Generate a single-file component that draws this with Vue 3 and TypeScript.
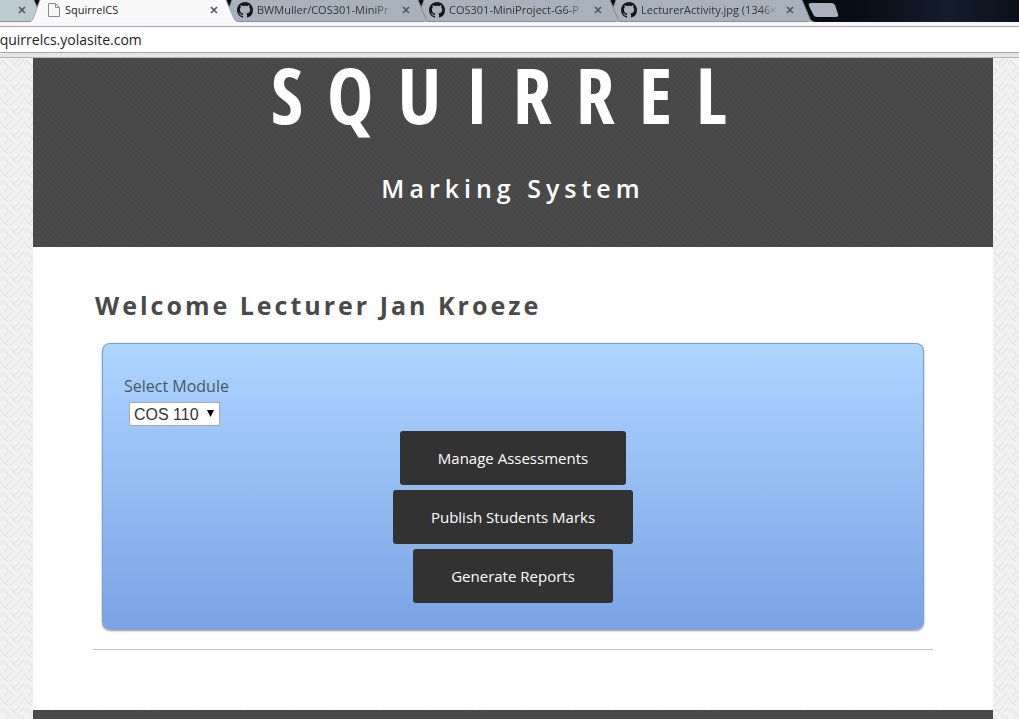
<script setup lang="ts">
import { ref } from 'vue'

interface Tab {
  id: string
  title: string
  icon: 'page' | 'github' | 'none'
  kind: 'first' | 'active' | 'idle'
}

const tabs: Tab[] = [
  { id: 'a', title: '', icon: 'none', kind: 'first' },
  { id: 'b', title: 'SquirrelCS', icon: 'page', kind: 'active' },
  { id: 'c', title: 'BWMuller/COS301-MiniPr', icon: 'github', kind: 'idle' },
  { id: 'd', title: 'COS301-MiniProject-G6-P', icon: 'github', kind: 'idle' },
  { id: 'e', title: 'LecturerActivity.jpg (1346×', icon: 'github', kind: 'idle' },
]

const address = ref('squirrelcs.yolasite.com')
const moduleCode = ref('COS 110')
const modules: string[] = ['COS 110', 'COS 121', 'COS 212', 'COS 301']
const actions: string[] = ['Manage Assessments', 'Publish Students Marks', 'Generate Reports']
</script>

<template>
  <div class="browser">
    <header class="chrome">
      <nav class="strip" aria-label="Tabs">
        <div v-for="tab in tabs" :key="tab.id" class="tab" :class="tab.kind">
          <svg class="shape" viewBox="0 0 208 22" preserveAspectRatio="none" aria-hidden="true">
            <path class="fill" d="M8 0 L1 19 Q0 21 -2 22 H206 Q203 21 202 19 L194 0 Z" />
            <path class="edge" d="M8 0 L1 19 Q0 21 -2 22 M206 22 Q203 21 202 19 L194 0" />
          </svg>
          <svg v-if="tab.icon === 'page'" class="page-icon" viewBox="0 0 12 14" aria-hidden="true">
            <path d="M.5 .5 H7.5 L11.5 4.5 V13.5 H.5 Z M7.5 .5 V4.5 H11.5" />
          </svg>
          <svg v-if="tab.icon === 'github'" class="github-icon" viewBox="0 0 16 16" aria-hidden="true">
            <path d="M8 0C3.58 0 0 3.58 0 8c0 3.54 2.29 6.53 5.47 7.59.4.07.55-.17.55-.38 0-.19-.01-.82-.01-1.49-2.01.37-2.53-.49-2.69-.94-.09-.23-.48-.94-.82-1.13-.28-.15-.68-.52-.01-.53.63-.01 1.08.58 1.23.82.72 1.21 1.87.87 2.33.66.07-.52.28-.87.51-1.07-1.78-.2-3.64-.89-3.64-3.95 0-.87.31-1.59.82-2.15-.08-.2-.36-1.02.08-2.12 0 0 .67-.21 2.2.82.64-.18 1.32-.27 2-.27s1.36.09 2 .27c1.53-1.04 2.2-.82 2.2-.82.44 1.1.16 1.92.08 2.12.51.56.82 1.27.82 2.15 0 3.07-1.87 3.75-3.65 3.95.29.25.54.73.54 1.48 0 1.07-.01 1.93-.01 2.2 0 .21.15.46.55.38A8.01 8.01 0 0 0 16 8c0-4.42-3.58-8-8-8z" />
          </svg>
          <span class="title">{{ tab.title }}</span>
          <button class="close" type="button" aria-label="Close tab">
            <svg viewBox="0 0 8 8" aria-hidden="true"><path d="M1 1 L7 7 M7 1 L1 7" /></svg>
          </button>
        </div>
        <button class="new-tab" type="button" aria-label="New tab">
          <svg viewBox="0 0 32 16" aria-hidden="true">
            <path d="M3 1 H23 Q26 1 27 3 L30 12 Q31 15 28 15 H9 Q6 15 5 12 L1 4 Q0 1 3 1 Z" />
          </svg>
        </button>
      </nav>
      <div class="toolbar">
        <input v-model="address" class="address" type="text" aria-label="Address" />
      </div>
    </header>

    <div class="page">
      <main class="site">
        <div class="banner">
          <h1>SQUIRREL</h1>
          <p class="tagline">Marking System</p>
        </div>
        <section class="content">
          <h2>Welcome Lecturer Jan Kroeze</h2>
          <form class="panel" @submit.prevent>
            <label for="module">Select Module</label>
            <div class="picker">
              <select id="module" v-model="moduleCode">
                <option v-for="m in modules" :key="m">{{ m }}</option>
              </select>
              <svg class="caret" viewBox="0 0 7 7" aria-hidden="true"><path d="M0 0 H7 L3.5 7 Z" /></svg>
            </div>
            <div class="actions">
              <button v-for="a in actions" :key="a" class="action" type="button">{{ a }}</button>
            </div>
          </form>
          <hr />
        </section>
        <footer class="footer"></footer>
      </main>
    </div>
  </div>
</template>

<style>
body {
  margin: 0;
  overflow: hidden;
}
</style>

<style scoped>
* {
  box-sizing: border-box;
}
.browser {
  display: flex;
  flex-direction: column;
  height: 100vh;
  overflow: hidden;
  font-family: "Open Sans", "Noto Sans", sans-serif;
}
.chrome {
  flex: none;
}
.strip {
  display: flex;
  height: 22px;
  overflow: hidden;
  background: linear-gradient(90deg, #060b14 80%, #090f18 85%, #141c2a 93%, #0b111b);
}
.tab {
  position: relative;
  display: flex;
  flex: 0 0 192px;
  align-items: center;
  min-width: 0;
  padding: 0 14px 3px 5px;
}
.tab.first {
  flex-basis: 40px;
  justify-content: flex-end;
}
.tab:nth-child(1) { z-index: 4; }
.tab:nth-child(2) { z-index: 5; padding-left: 8px; }
.tab:nth-child(3) { z-index: 3; }
.tab:nth-child(4) { z-index: 2; }
.tab:nth-child(5) { z-index: 1; }
.shape {
  position: absolute;
  right: -8px;
  top: 0;
  width: 208px;
  height: 22px;
  overflow: visible;
}
.fill {
  fill: #a9b1bc;
}
.first .fill {
  fill: #bccbd0;
}
.active .fill {
  fill: #f9f9fa;
}
.edge {
  fill: none;
  stroke: #858b94;
}
.idle::after,
.first::after {
  content: "";
  position: absolute;
  inset: auto 0 0 0;
  height: 1px;
  background: #8b9097;
}
.active .edge {
  stroke: #a5a9ae;
}
.page-icon {
  position: relative;
  flex: none;
  width: 12px;
  height: 14px;
  margin-right: 5px;
  fill: #f6f6f6;
  stroke: #8c8c8c;
}
.github-icon {
  position: relative;
  flex: none;
  width: 16px;
  height: 16px;
  margin-right: 4px;
  fill: #15181d;
}
.title {
  position: relative;
  flex: 1;
  min-width: 0;
  overflow: hidden;
  margin-right: 7px;
  font-size: 11px;
  line-height: 18px;
  white-space: nowrap;
  color: #30343a;
}
.active .title {
  color: #1c1c1c;
}
.first .title {
  display: none;
}
.idle .title {
  mask-image: linear-gradient(90deg, #000 86%, transparent);
}
.close {
  position: relative;
  display: flex;
  flex: none;
  padding: 0;
  border: 0;
  background: none;
}
.close svg {
  width: 8px;
  height: 8px;
  fill: none;
  stroke: #50545a;
  stroke-width: 1.6;
}
.new-tab {
  position: relative;
  display: flex;
  padding: 2px 0 0;
  border: 0;
  background: none;
}
.new-tab svg {
  width: 32px;
  height: 16px;
  fill: #a9b1bc;
}
.toolbar {
  padding-top: 4px;
  background: linear-gradient(#f6f6f8 4px, #e6e6e6 4px);
  border-bottom: 1px solid #b4b4b4;
}
.address {
  display: block;
  width: 100%;
  height: 27px;
  margin-bottom: 4px;
  padding: 0;
  border: solid #a8a8aa;
  border-width: 1px 0;
  outline: 0;
  background: #fff;
  font: 14px/25px "Open Sans", "Noto Sans", sans-serif;
  text-indent: -7px;
  color: #222;
}
.page {
  flex: 1;
  min-height: 0;
  padding: 0 26px 0 33px;
  background: #f2f2f2 url("data:image/svg+xml,%3Csvg xmlns='http://www.w3.org/2000/svg' width='24' height='24'%3E%3Cpath d='M-2 8 4 2M0 18 9 9M3 3 14 14M10 2 20 12M5 21 12 14M9 25 20 14M14 6 20 0M18 8 26 0M15 19 24 10M16 26 26 16M-2 14 8 24' fill='none' stroke='%23e9e9e9' stroke-width='2'/%3E%3C/svg%3E");
}
.site {
  background: #fff;
}
.banner,
.footer {
  background: repeating-linear-gradient(45deg, #484848 0 2px, #4a4a4a 2px 4px);
}
.banner {
  height: 189px;
  text-align: center;
  color: #fff;
}
h1 {
  margin: 0;
  padding-right: 4px;
  font: 600 78px/72px "Open Sans Condensed", "Roboto Condensed", "Liberation Sans Narrow", sans-serif;
  letter-spacing: 24px;
  white-space: nowrap;
}
.tagline {
  margin: 0;
  padding-top: 38px;
  font-size: 25px;
  font-weight: 600;
  line-height: 40px;
  letter-spacing: 5px;
}
.content {
  padding: 40px 60px 60px;
}
h2 {
  margin: 0;
  padding-left: 2px;
  font: bold 25px/36px "Open Sans", "Noto Sans", sans-serif;
  letter-spacing: 3px;
  color: #4a4a4a;
}
.panel {
  margin: 20px 9px 19px;
  padding: 30px 21px 26px;
  border: 1px solid #7c9fd0;
  border-bottom-color: #93a5c4;
  border-radius: 8px;
  background: linear-gradient(#aed5ff, #7ba3e5);
  box-shadow: 0 1px 2px #999;
}
label {
  display: block;
  font-size: 16px;
  line-height: 24px;
  color: #4a5663;
}
.picker {
  position: relative;
  width: 91px;
  margin: 4px 0 0 5px;
}
select {
  display: block;
  width: 100%;
  height: 24px;
  padding: 0 4px;
  appearance: none;
  border: 1px solid #a3a9b2;
  border-radius: 0;
  background: #fff;
  font: 16px "Liberation Sans", Arial, sans-serif;
  color: #333;
}
.caret {
  position: absolute;
  top: 8px;
  right: 6px;
  width: 7px;
  height: 7px;
  pointer-events: none;
  fill: #000;
}
.actions {
  display: flex;
  flex-direction: column;
  align-items: center;
  gap: 5px;
  margin-top: 5px;
}
.action {
  height: 54px;
  padding: 0 38px;
  border: 0;
  border-radius: 3px;
  background: #323232;
  font: 15px/24px "Open Sans", "Noto Sans", sans-serif;
  color: #fff;
}
hr {
  margin: 0;
  border: 0;
  border-top: 1px solid #c3c3c3;
}
.footer {
  height: 60px;
}
</style>
